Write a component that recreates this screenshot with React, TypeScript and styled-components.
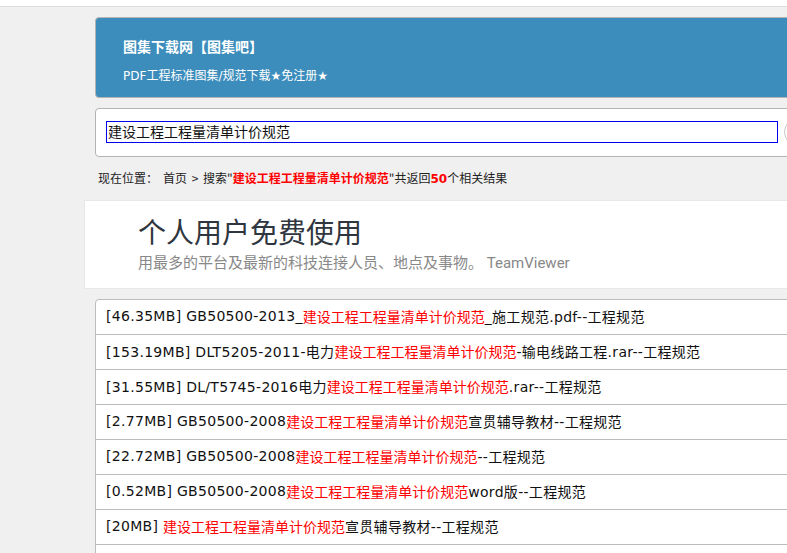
import styled, { createGlobalStyle } from "styled-components";

const GlobalStyle = createGlobalStyle`
  html, body {
    margin: 0;
    padding: 0;
    overflow: hidden;
    background: #f0f0f0;
    font-family: "DejaVu Sans", "Noto Sans CJK SC", sans-serif;
    color: #222;
  }
  * { box-sizing: border-box; }
`;

const KEYWORD = "建设工程工程量清单计价规范";

interface Result {
  size: string;
  before: string;
  after: string;
}

const results: Result[] = [
  { size: "46.35MB", before: "GB50500-2013_", after: "_施工规范.pdf--工程规范" },
  { size: "153.19MB", before: "DLT5205-2011-电力", after: "-输电线路工程.rar--工程规范" },
  { size: "31.55MB", before: "DL/T5745-2016电力", after: ".rar--工程规范" },
  { size: "2.77MB", before: "GB50500-2008", after: "宣贯辅导教材--工程规范" },
  { size: "22.72MB", before: "GB50500-2008", after: "--工程规范" },
  { size: "0.52MB", before: "GB50500-2008", after: "word版--工程规范" },
  { size: "20MB", before: "", after: "宣贯辅导教材--工程规范" },
  { size: "18.6MB", before: "GB50500-2013", after: "--工程规范" },
];

const TopBar = styled.div`
  height: 7px;
  background: #fff;
  border-bottom: 1px solid #dcdcdc;
`;

const Page = styled.div`
  width: 760px;
  margin-left: 95px;
  padding-top: 10px;
  display: flex;
  flex-direction: column;
`;

const Header = styled.div`
  height: 81px;
  background: #3c8dbc;
  border: 1px solid #b4b4b4;
  border-radius: 4px;
  padding: 18px 0 0 27px;
  color: #fff;
`;

const SiteTitle = styled.div`
  font-size: 14px;
  font-weight: bold;
  line-height: 20px;
  font-family: "Noto Sans CJK SC", sans-serif;
`;

const SiteSub = styled.div`
  margin-top: 12px;
  font-size: 12px;
  line-height: 16px;
  font-family: "DejaVu Sans", "Noto Sans CJK SC", sans-serif;
`;

const SearchBox = styled.div`
  margin-top: 10px;
  height: 49px;
  background: #fff;
  border: 1px solid #b4b4b4;
  border-radius: 4px;
  padding: 12px 0 0 10px;
  display: flex;
  align-items: flex-start;
  gap: 6px;
`;

const SearchInput = styled.div`
  width: 672px;
  flex-shrink: 0;
  height: 22px;
  border: 1px solid #0000ee;
  font-size: 14px;
  line-height: 19px;
  padding-left: 1px;
  color: #111;
  font-family: "Noto Sans CJK SC", sans-serif;
`;

const RoundButton = styled.div`
  width: 28px;
  height: 28px;
  flex-shrink: 0;
  margin-top: -3px;
  border-radius: 50%;
  border: 1px solid #c8c8c8;
`;

const Crumbs = styled.div`
  margin-top: 12px;
  padding-left: 3px;
  font-size: 12px;
  line-height: 18px;
  color: #222;
  font-family: "Noto Sans CJK SC", sans-serif;
  word-spacing: 2px;
`;

const CrumbLabel = styled.span`
  margin-right: 5px;
`;

const Hot = styled.b`
  color: #ff0000;
  font-family: "DejaVu Sans", "Noto Sans CJK SC", sans-serif;
`;

const Ad = styled.div`
  margin: 12px 0 0 -11px;
  width: 771px;
  height: 89px;
  background: #fff;
  border: 1px solid #e8e8e8;
  padding: 14px 0 0 53px;
  font-family: Roboto, "Noto Sans CJK SC", sans-serif;
`;

const AdTitle = styled.div`
  font-size: 28px;
  line-height: 37px;
  color: #2f3640;
`;

const AdText = styled.div`
  font-size: 15px;
  line-height: 22px;
  color: #888;
`;

const List = styled.div`
  margin-top: 10px;
  background: #fff;
  border: 1px solid #bcbcbc;
  border-radius: 4px 0 0 0;
  display: flex;
  flex-direction: column;
`;

const Row = styled.div<{ $last?: boolean }>`
  height: 35px;
  border-bottom: ${(p) => (p.$last ? "none" : "1px solid #bcbcbc")};
  padding: 0 0 2px 10px;
  display: flex;
  align-items: center;
  font-size: 14px;
  white-space: nowrap;
  color: #111;
`;

const Plain = styled.span`
  letter-spacing: 0.3px;
`;

const Red = styled.span`
  color: #ff0000;
`;

export default function App() {
  return (
    <>
      <GlobalStyle />
      <TopBar />
      <Page>
        <Header>
          <SiteTitle>图集下载网【图集吧】</SiteTitle>
          <SiteSub>PDF工程标准图集/规范下载★免注册★</SiteSub>
        </Header>
        <SearchBox>
          <SearchInput>{KEYWORD}</SearchInput>
          <RoundButton />
        </SearchBox>
        <Crumbs>
          <CrumbLabel>现在位置：</CrumbLabel>
          首页 &gt; 搜索"<Hot>{KEYWORD}</Hot>"共返回<Hot>50</Hot>个相关结果
        </Crumbs>
        <Ad>
          <AdTitle>个人用户免费使用</AdTitle>
          <AdText>用最多的平台及最新的科技连接人员、地点及事物。 TeamViewer</AdText>
        </Ad>
        <List>
          {results.map((r, i) => (
            <Row key={i} $last={i === results.length - 1}>
              <Plain>
                [{r.size}]&nbsp;{r.before}
              </Plain>
              <Red>{KEYWORD}</Red>
              <Plain>{r.after}</Plain>
            </Row>
          ))}
        </List>
      </Page>
    </>
  );
}
